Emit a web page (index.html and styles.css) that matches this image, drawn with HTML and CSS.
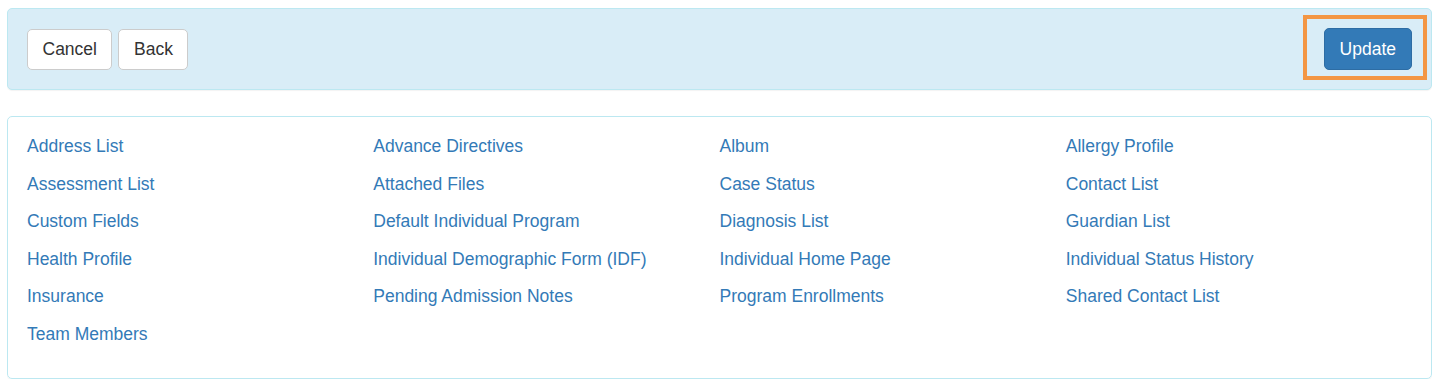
FILE: index.html
```html
<!DOCTYPE html>
<html>
<head>
<meta charset="utf-8">
<link rel="stylesheet" href="styles.css">
</head>
<body>
<div class="toolbar">
  <div class="left-actions">
    <button class="btn btn-default">Cancel</button>
    <button class="btn btn-default">Back</button>
  </div>
  <div class="update-wrap">
    <button class="btn btn-primary">Update</button>
    <span class="highlight"></span>
  </div>
</div>
<div class="links-panel">
  <a href="#">Address List</a>
  <a href="#">Advance Directives</a>
  <a href="#">Album</a>
  <a href="#">Allergy Profile</a>
  <a href="#">Assessment List</a>
  <a href="#">Attached Files</a>
  <a href="#">Case Status</a>
  <a href="#">Contact List</a>
  <a href="#">Custom Fields</a>
  <a href="#">Default Individual Program</a>
  <a href="#">Diagnosis List</a>
  <a href="#">Guardian List</a>
  <a href="#">Health Profile</a>
  <a href="#">Individual Demographic Form (IDF)</a>
  <a href="#">Individual Home Page</a>
  <a href="#">Individual Status History</a>
  <a href="#">Insurance</a>
  <a href="#">Pending Admission Notes</a>
  <a href="#">Program Enrollments</a>
  <a href="#">Shared Contact List</a>
  <a href="#">Team Members</a>
</div>
</body>
</html>
```
FILE: styles.css
```css
* { box-sizing: border-box; }
body {
  margin: 8px 7px 0 7px;
  font-family: "Liberation Sans", Arial, sans-serif;
  font-size: 17.5px;
  line-height: 24px;
  color: #333;
  background: #fff;
}
.toolbar {
  display: flex;
  justify-content: space-between;
  align-items: center;
  padding: 19px;
  background: #d9edf7;
  border: 1px solid #bce8f1;
  border-radius: 5px;
  box-shadow: 0 1px 1px rgba(0,0,0,0.05);
  margin-bottom: 26px;
}
.left-actions {
  display: flex;
  gap: 6px;
}
.btn {
  font-family: inherit;
  font-size: 17.5px;
  line-height: 24px;
  padding: 7px 14.5px 8px;
  border: 1px solid #ccc;
  border-radius: 5px;
  background: #fff;
  color: #333;
  cursor: pointer;
}
.btn-primary {
  background: #337ab7;
  border-color: #2e6da4;
  color: #fff;
  padding: 7.5px 15px 8.5px;
}
.update-wrap {
  position: relative;
  display: flex;
}
.highlight {
  position: absolute;
  left: -21px;
  top: -13px;
  right: -15px;
  bottom: -10px;
  border: 4px solid #f39644;
  pointer-events: none;
}
.links-panel {
  display: grid;
  grid-template-columns: repeat(4, 1fr);
  row-gap: 13.5px;
  padding: 17px 19px 32.5px;
  border: 1px solid #bce8f1;
  border-radius: 5px;
  box-shadow: 0 1px 1px rgba(0,0,0,0.05);
}
.links-panel a {
  color: #337ab7;
  text-decoration: none;
  height: 24px;
}
```
